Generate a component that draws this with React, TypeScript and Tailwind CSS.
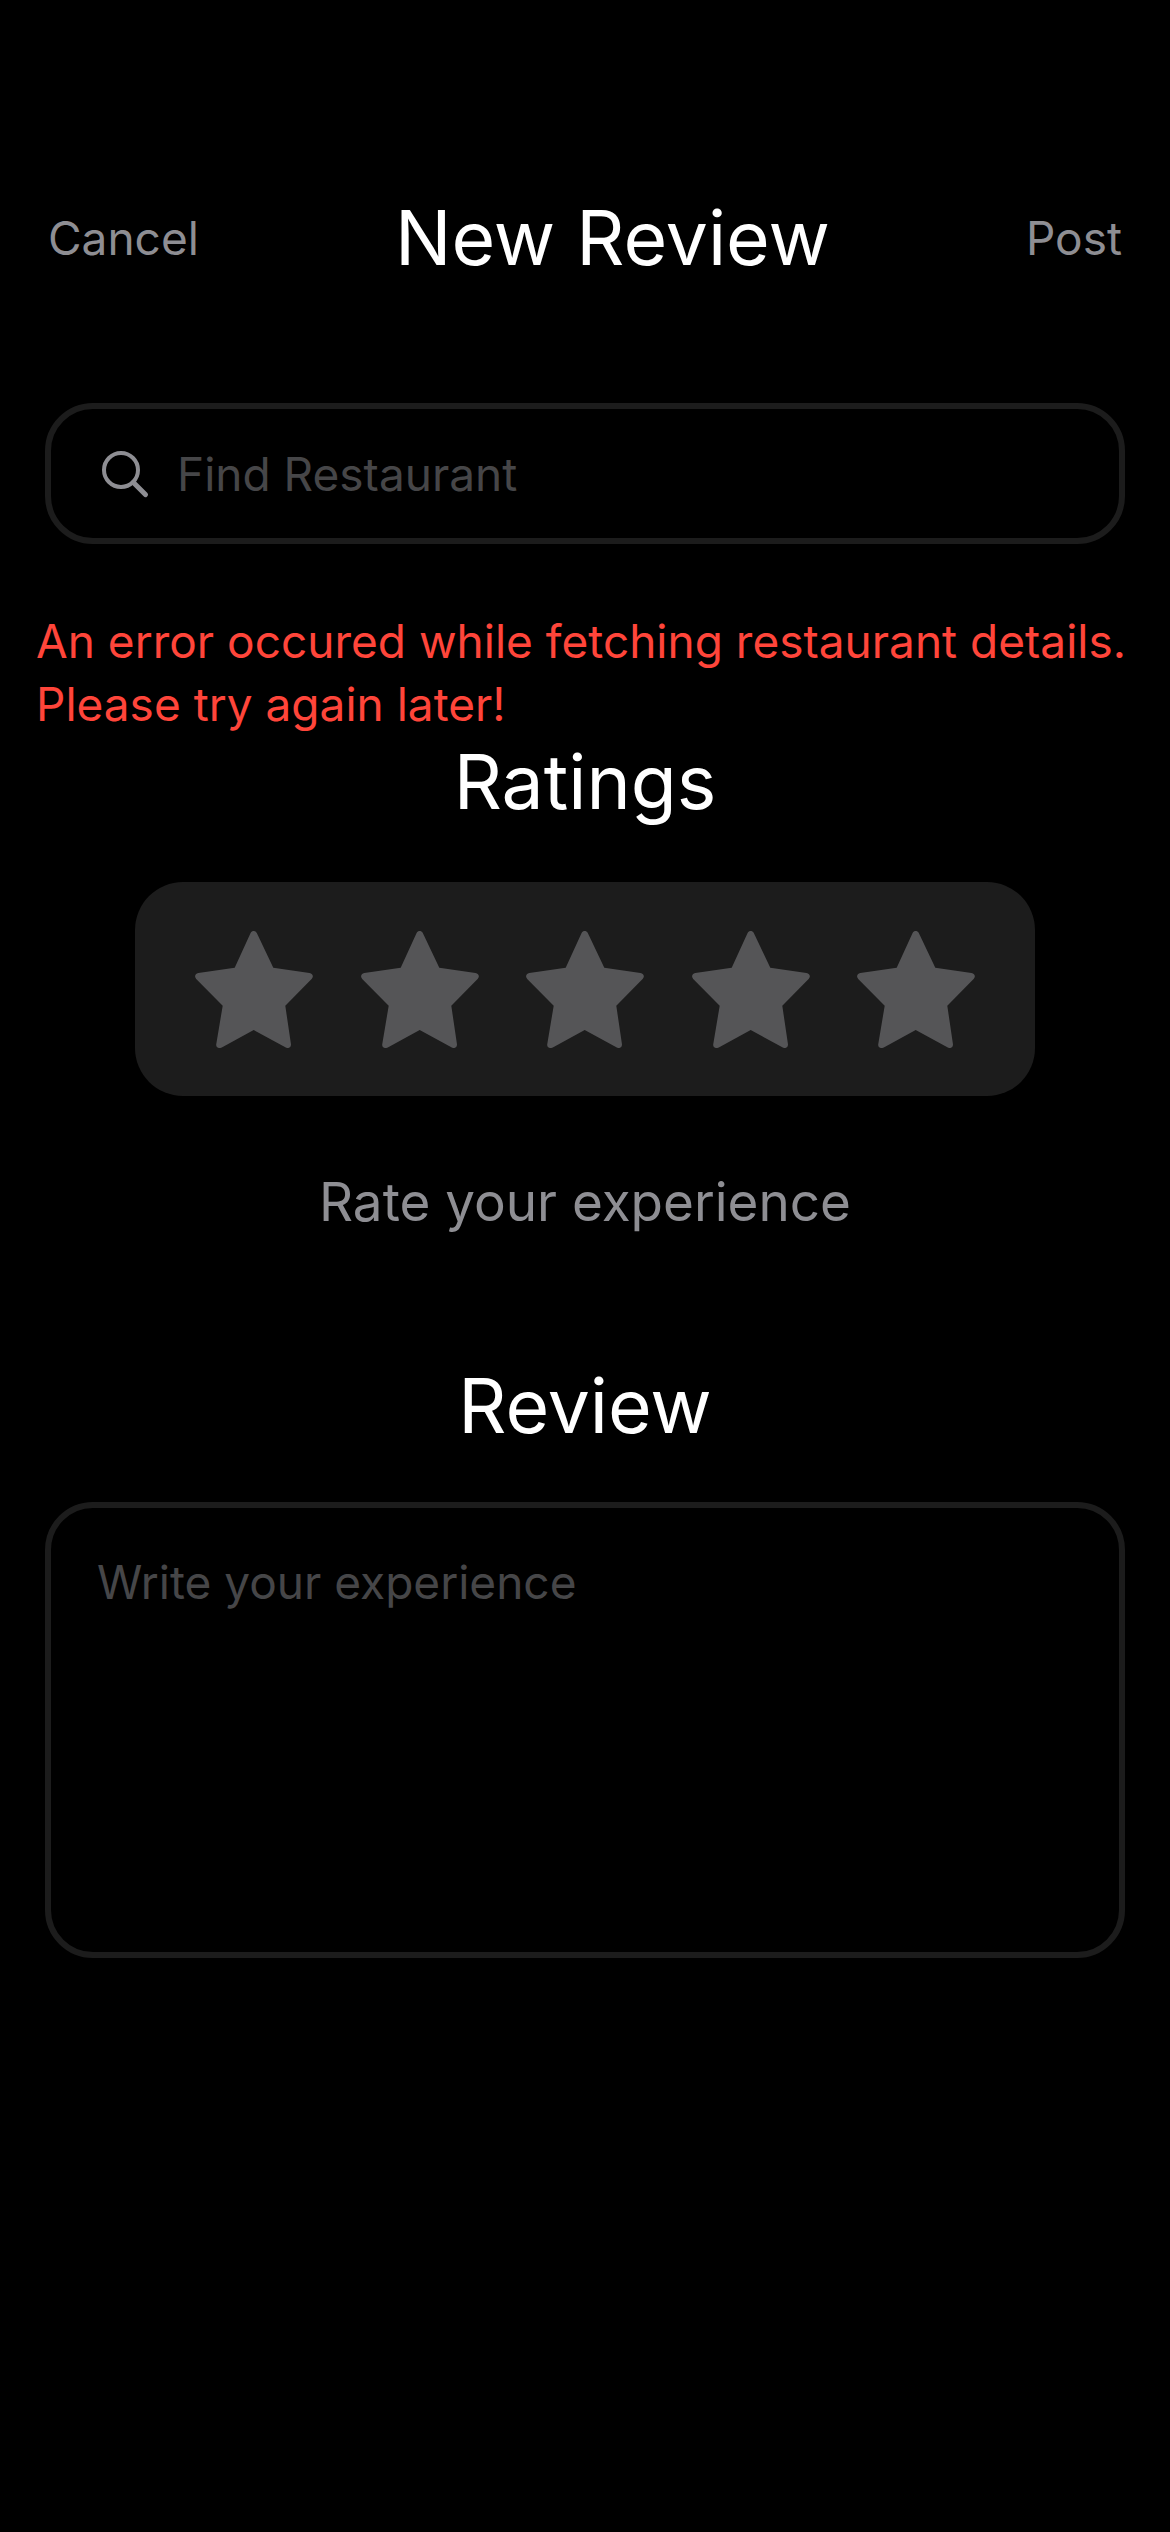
import { useState } from "react";

function SearchIcon() {
  return (
    <svg className="h-12 w-12 shrink-0" viewBox="0 0 48 48" fill="none" stroke="#8e8e93" strokeLinecap="round" aria-hidden="true">
      <circle cx="20" cy="20" r="17" strokeWidth="4" />
      <path d="M32.4 32.4L44.4 44.6" strokeWidth="5" />
    </svg>
  );
}

function StarIcon() {
  return (
    <svg className="h-[117px] w-[118px]" viewBox="0 0 118 117" fill="currentColor" aria-hidden="true">
      <path d="M55.600 2C57.200-.6 60.200-.6 61.800 2L78.300 36.700L114.500 42C117.800 42.600 119 45.500 116.600 48L90.300 74.700L96 113.500C96 116.600 93.400 117.800 90.800 116.600L58.700 99L26.800 116.600C23.600 117.800 21 116.600 21.200 113.500L27.700 74.700L1.200 48C-1 45.500 .2 42.600 3.300 42L39.700 36.700Z" />
    </svg>
  );
}

export default function App() {
  const [rating, setRating] = useState(0);

  return (
    <main className="flex min-h-screen flex-col bg-black pt-[190px] font-['Inter',sans-serif] text-[46px] text-white">
      <header className="flex items-center justify-between px-12">
        <button type="button" className="text-[#8e8e93]">Cancel</button>
        <h1 className="text-[75px] leading-[96px]">New Review</h1>
        <button type="button" className="text-[#8e8e93]">Post</button>
      </header>

      <label className="mx-[45px] mt-[117px] flex h-[141px] items-center gap-7 rounded-[48px] border-6 border-[#1c1c1c] px-[50px]">
        <SearchIcon />
        <input
          type="text"
          aria-label="Find Restaurant"
          placeholder="Find Restaurant"
          className="min-w-0 flex-1 bg-transparent leading-[60px] outline-none placeholder:text-[#464648]"
        />
      </label>

      <p role="alert" className="mt-[66px] px-9 leading-[63px] text-[#ff453a]">
        An error occured while fetching restaurant details. Please try again later!
      </p>

      <section className="mt-px flex flex-col items-center">
        <h2 className="text-[75px] leading-[90px]">Ratings</h2>
        <div className="mt-[55px] flex h-[214px] w-10/13 items-center justify-between rounded-[48px] bg-[#1c1c1c] px-[60px]">
          {[1, 2, 3, 4, 5].map((n) => (
            <button
              key={n}
              type="button"
              aria-label={`${n} star${n > 1 ? "s" : ""}`}
              onClick={() => setRating(n)}
              className={n <= rating ? "text-[#ffd60a]" : "text-[#555557]"}
            >
              <StarIcon />
            </button>
          ))}
        </div>
        <p className="mt-[73px] text-[53px] leading-[66px] text-[#8e8e93]">Rate your experience</p>
      </section>

      <section className="mt-[126px] flex flex-col px-[45px]">
        <h2 id="review-title" className="text-center text-[75px] leading-[90px]">Review</h2>
        <textarea
          aria-labelledby="review-title"
          placeholder="Write your experience"
          className="mt-[51px] block h-[456px] w-full resize-none rounded-[48px] border-6 border-[#1c1c1c] bg-transparent px-[46px] py-11 leading-[60px] outline-none placeholder:text-[#464648]"
        />
      </section>
    </main>
  );
}
